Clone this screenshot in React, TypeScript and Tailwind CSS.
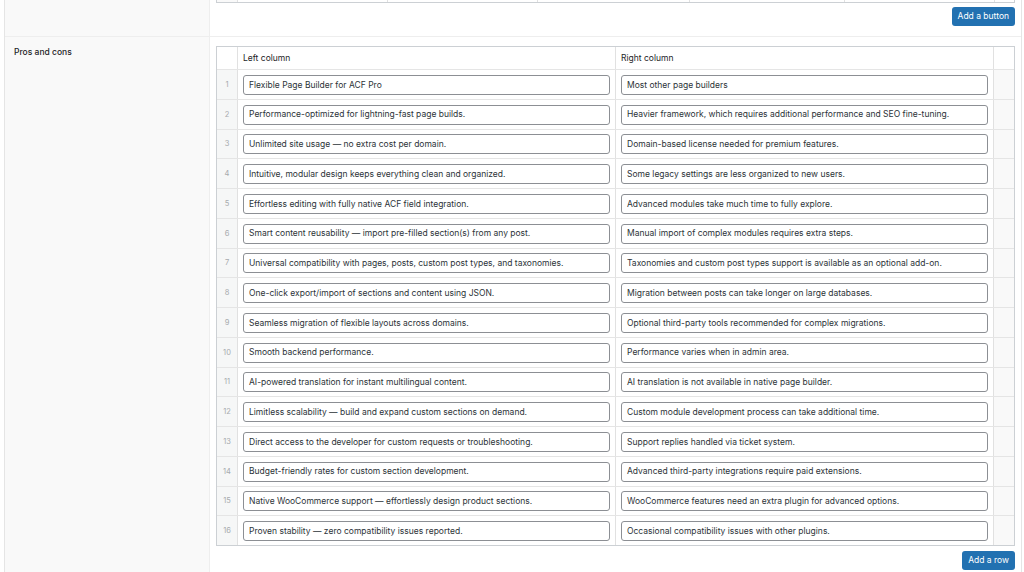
import React from 'react';

const rows: [string, string][] = [
  ['Flexible Page Builder for ACF Pro', 'Most other page builders'],
  ['Performance-optimized for lightning-fast page builds.', 'Heavier framework, which requires additional performance and SEO fine-tuning.'],
  ['Unlimited site usage — no extra cost per domain.', 'Domain-based license needed for premium features.'],
  ['Intuitive, modular design keeps everything clean and organized.', 'Some legacy settings are less organized to new users.'],
  ['Effortless editing with fully native ACF field integration.', 'Advanced modules take much time to fully explore.'],
  ['Smart content reusability — import pre-filled section(s) from any post.', 'Manual import of complex modules requires extra steps.'],
  ['Universal compatibility with pages, posts, custom post types, and taxonomies.', 'Taxonomies and custom post types support is available as an optional add-on.'],
  ['One-click export/import of sections and content using JSON.', 'Migration between posts can take longer on large databases.'],
  ['Seamless migration of flexible layouts across domains.', 'Optional third-party tools recommended for complex migrations.'],
  ['Smooth backend performance.', 'Performance varies when in admin area.'],
  ['AI-powered translation for instant multilingual content.', 'AI translation is not available in native page builder.'],
  ['Limitless scalability — build and expand custom sections on demand.', 'Custom module development process can take additional time.'],
  ['Direct access to the developer for custom requests or troubleshooting.', 'Support replies handled via ticket system.'],
  ['Budget-friendly rates for custom section development.', 'Advanced third-party integrations require paid extensions.'],
  ['Native WooCommerce support — effortlessly design product sections.', 'WooCommerce features need an extra plugin for advanced options.'],
  ['Proven stability — zero compatibility issues reported.', 'Occasional compatibility issues with other plugins.'],
];

function TextInput({ value }: { value: string }) {
  return (
    <div className="h-[20px] w-full flex items-center px-[5px] border border-[#8c8f94] rounded-[3px] bg-white text-[8.5px] text-[#2c3338] whitespace-nowrap overflow-hidden">
      {value}
    </div>
  );
}

function Button({ label }: { label: string }) {
  return (
    <button className="h-[19px] px-[6px] rounded-[3px] bg-[#2271b1] text-white text-[8.5px] leading-none">
      {label}
    </button>
  );
}

export default function App() {
  return (
    <div
      className="w-[1024px] h-[572px] overflow-hidden bg-white text-[#1d2327]"
      style={{ fontFamily: 'Inter, "Noto Sans", sans-serif' }}
    >
      <div className="ml-[4px] mr-[2px] border-l border-r border-[#e5e5e5] h-full">
        {/* Buttons field (tail end) */}
        <div className="flex h-[37px] border-b border-[#eeeeee]">
          <div className="w-[205px] shrink-0 bg-[#f9f9f9] border-r border-[#eeeeee]" />
          <div className="flex-1 pl-[6px] pr-[7px]">
            <div className="flex h-[3px] w-[799px] border-x border-b border-[#ccd0d4]">
              <div className="w-[21px] bg-[#f9f9f9] border-r border-[#e1e1e1]" />
              <div className="w-[150px] border-r border-[#e1e1e1]" />
              <div className="w-[150px] border-r border-[#e1e1e1]" />
              <div className="w-[152px] border-r border-[#e1e1e1]" />
              <div className="w-[155px] border-r border-[#e1e1e1]" />
              <div className="w-[150px] border-r border-[#e1e1e1]" />
              <div className="flex-1" />
            </div>
            <div className="flex justify-end mt-[4px]">
              <Button label="Add a button" />
            </div>
          </div>
        </div>

        {/* Pros and cons repeater */}
        <div className="flex h-full">
          <div className="w-[205px] shrink-0 bg-[#f9f9f9] border-r border-[#eeeeee] pl-[9px] pt-[10px] text-[8.5px] leading-[11px] font-medium">
            Pros and cons
          </div>
          <div className="flex-1 pl-[6px] pr-[7px] pt-[9px]">
            <div className="w-[799px] border border-[#ccd0d4]">
              <div className="flex h-[22px] text-[8.5px] text-[#1d2327]">
                <div className="w-[21px] border-r border-[#e1e1e1]" />
                <div className="w-[378px] border-r border-[#e1e1e1] pl-[5px] flex items-center">Left column</div>
                <div className="w-[378px] border-r border-[#e1e1e1] pl-[5px] flex items-center">Right column</div>
                <div className="flex-1" />
              </div>
              {rows.map(([left, right], i) => (
                <div key={i} className="flex h-[29.75px] border-t border-[#e5e5e5]">
                  <div className="w-[21px] bg-[#f6f7f7] border-r border-[#e1e1e1] flex items-center justify-center text-[7.5px] text-[#a7aaad]">
                    {i + 1}
                  </div>
                  <div className="w-[378px] border-r border-[#e1e1e1] pl-[5px] pr-[5px] pt-[1px] flex items-center">
                    <TextInput value={left} />
                  </div>
                  <div className="w-[378px] border-r border-[#e1e1e1] pl-[5px] pr-[5px] pt-[1px] flex items-center">
                    <TextInput value={right} />
                  </div>
                  <div className="flex-1 bg-[#f9f9f9]" />
                </div>
              ))}
            </div>
            <div className="flex justify-end mt-[5px]">
              <Button label="Add a row" />
            </div>
          </div>
        </div>
      </div>
    </div>
  );
}
